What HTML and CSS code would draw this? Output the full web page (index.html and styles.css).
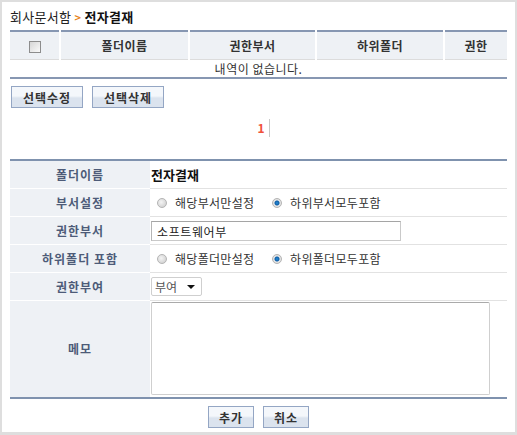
FILE: index.html
```html
<!DOCTYPE html>
<html>
<head>
    <meta charset="utf-8">
    <link rel="stylesheet" href="styles.css">
</head>
<body>
    <div class="frame">
        <div class="path">회사문서함 <span class="arrow">&gt;</span> <b>전자결재</b></div>

        <table class="list">
            <tr class="list-head">
                <th class="col-check"><span class="check"></span></th>
                <th class="col-name">폴더이름</th>
                <th class="col-dept">권한부서</th>
                <th class="col-sub">하위폴더</th>
                <th class="col-auth">권한</th>
            </tr>
            <tr>
                <td colspan="5" class="empty">내역이 없습니다.</td>
            </tr>
        </table>

        <div class="actions">
            <button class="btn">선택수정</button>
            <button class="btn">선택삭제</button>
        </div>

        <div class="paging">
            <span class="page-num">1</span><span class="page-bar"></span>
        </div>

        <table class="form">
            <tr>
                <th>폴더이름</th>
                <td><b class="folder">전자결재</b></td>
            </tr>
            <tr>
                <th>부서설정</th>
                <td>
                    <label class="radio"><span class="dot"></span>해당부서만설정</label>
                    <label class="radio"><span class="dot on"></span>하위부서모두포함</label>
                </td>
            </tr>
            <tr>
                <th>권한부서</th>
                <td><input class="text" type="text" value="소프트웨어부"></td>
            </tr>
            <tr>
                <th>하위폴더 포함</th>
                <td>
                    <label class="radio"><span class="dot"></span>해당폴더만설정</label>
                    <label class="radio"><span class="dot on"></span>하위폴더모두포함</label>
                </td>
            </tr>
            <tr>
                <th>권한부여</th>
                <td><span class="select">부여<span class="caret"></span></span></td>
            </tr>
            <tr class="memo-row">
                <th>메모</th>
                <td><textarea class="memo"></textarea></td>
            </tr>
        </table>

        <div class="bottom">
            <button class="btn small">추가</button>
            <button class="btn small">취소</button>
        </div>
    </div>
</body>
</html>
```

FILE: styles.css
```css
html, body {
    margin: 0;
    padding: 0;
    background: #fff;
}

.frame {
    box-sizing: border-box;
    width: 517px;
    height: 435px;
    border: 2px solid #dedede;
    border-bottom-width: 3px;
    padding: 0 8px;
    font-family: "Noto Sans CJK KR", "DejaVu Sans", sans-serif;
    font-size: 12px;
    line-height: 16px;
    color: #333;
}

.path {
    height: 28px;
    line-height: 30px;
    font-size: 13px;
    color: #222;
    letter-spacing: 0.3px;
}

.path b {
    color: #111;
}

.arrow {
    color: #e8851c;
    font-size: 11px;
    font-weight: bold;
}

table {
    width: 100%;
    border-collapse: collapse;
}

.list {
    border-top: 2px solid #8797b2;
    border-bottom: 2px solid #8797b2;
}

.list-head th {
    height: 27px;
    padding: 0;
    background: #eef1f5;
    border-left: 2px solid #fff;
    border-bottom: 1px solid #dcdcdc;
    font-weight: bold;
    color: #333;
    letter-spacing: 0.5px;
}

.list-head th:first-child {
    border-left: none;
}

.col-check { width: 49px; }
.col-name { width: 127px; }
.col-dept { width: 125px; }
.col-sub { width: 126px; }

.check {
    display: inline-block;
    width: 10px;
    height: 10px;
    border: 1px solid #8d8d8d;
    background: linear-gradient(135deg, #d6d6d6, #fafafa);
    vertical-align: middle;
}

.empty {
    height: 17px;
    padding: 0;
    text-align: center;
    letter-spacing: 0.5px;
}

.actions {
    display: flex;
    gap: 9px;
    padding: 7px 0 0 1px;
    height: 22px;
}

.btn {
    box-sizing: border-box;
    height: 22px;
    width: 72px;
    padding: 0;
    border: 1px solid #94a6c4;
    background: linear-gradient(#f4f7fb 0%, #f4f7fb 45%, #dbe3ee 55%, #dbe3ee 100%);
    font-family: "Noto Sans CJK KR", sans-serif;
    font-size: 12px;
    font-weight: bold;
    letter-spacing: 1px;
    color: #333;
    cursor: pointer;
}

.btn.small {
    width: 46px;
}

.paging {
    display: flex;
    justify-content: center;
    align-items: center;
    gap: 4px;
    height: 18px;
    padding: 11px 0 22px 10px;
}

.page-num {
    color: #f0513a;
    font-weight: bold;
    font-size: 12px;
}

.page-bar {
    width: 1px;
    height: 18px;
    background: #c8c8c8;
}

.form {
    border-top: 2px solid #7f92ae;
    border-bottom: 2px solid #7f92ae;
}

.form th {
    width: 140px;
    height: 27px;
    padding: 0;
    background: #eef1f5;
    border-bottom: 1px solid #fff;
    color: #4d5b78;
    font-weight: bold;
    letter-spacing: 1px;
}

.form td {
    height: 27px;
    padding: 0 0 0 1px;
    border-bottom: 1px solid #e2e2e2;
}

.form tr:last-child th,
.form tr:last-child td {
    border-bottom: none;
}

.folder {
    font-size: 13px;
    color: #111;
}

.radio {
    display: inline-flex;
    align-items: center;
    margin-right: 9px;
    color: #333;
    letter-spacing: 0.3px;
}

.dot {
    box-sizing: border-box;
    width: 10px;
    height: 10px;
    margin: 0 8px 0 6px;
    border-radius: 50%;
    border: 1px solid #b5b5b5;
    background: radial-gradient(circle at 40% 40%, #f4f4f4, #c9c9c9);
}

.dot.on {
    background: radial-gradient(circle, #2a8fd6 0, #0d5ea8 2px, #eaeaea 3px, #c7c7c7 100%);
}

.text {
    box-sizing: border-box;
    width: 250px;
    height: 20px;
    margin-top: 1px;
    padding: 0 5px;
    border: 1px solid #c9c9c9;
    border-top-color: #a5a5a5;
    border-left-color: #b5b5b5;
    font-family: "Noto Sans CJK KR", sans-serif;
    font-size: 12px;
    letter-spacing: 0.6px;
    color: #222;
    vertical-align: middle;
}

.select {
    box-sizing: border-box;
    display: inline-flex;
    align-items: center;
    justify-content: space-between;
    width: 51px;
    height: 19px;
    padding: 0 6px 0 3px;
    border: 1px solid #cfcfcf;
    border-radius: 2px;
    color: #555;
    vertical-align: middle;
}

.caret {
    width: 0;
    height: 0;
    border-left: 4px solid transparent;
    border-right: 4px solid transparent;
    border-top: 4px solid #111;
}

.memo-row th,
.memo-row td {
    height: 96px;
}

.memo {
    box-sizing: border-box;
    display: block;
    width: 339px;
    height: 93px;
    margin: 1px 0 2px;
    border: 1px solid #cfcfcf;
    border-top-color: #aaa;
    border-radius: 2px;
    resize: none;
}

.bottom {
    display: flex;
    justify-content: center;
    gap: 9px;
    padding-top: 7px;
}
```
